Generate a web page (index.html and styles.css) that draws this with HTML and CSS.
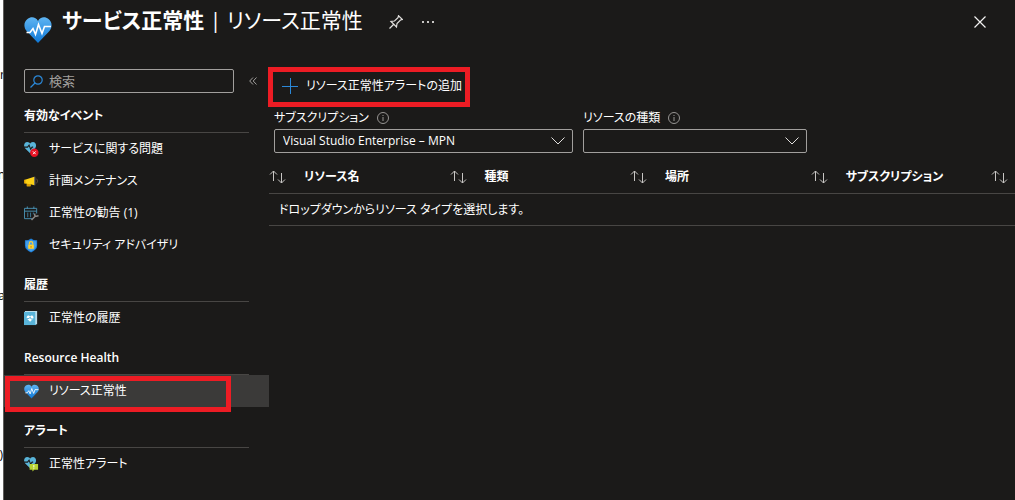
FILE: index.html
```
<!DOCTYPE html>
<html lang="ja">
<head>
    <meta charset="UTF-8">
    <title>サービス正常性 | リソース正常性</title>
    <link rel="stylesheet" href="styles.css">
</head>
<body>
    <svg class="defs" aria-hidden="true">
        <defs>
            <linearGradient id="heartFill" x1="0" y1="0" x2="0" y2="1">
                <stop offset="0" stop-color="#5eb4f2" />
                <stop offset="1" stop-color="#0f78d6" />
            </linearGradient>
            <symbol id="heart" viewBox="0 0 28 26">
                <path fill="url(#heartFill)" d="M14 26 L3 14.500 C-1 10 0 4.500 3.500 2 C7-0.800 12 0 14 4 C16 0 21-0.800 24.500 2 C28 4.500 29 10 25 14.500 Z" />
                <path fill="none" stroke="#fff" stroke-width="1.600" d="M2.500 15.500 H6 L9 11.500 L11.500 17.500 L14.500 7.500 L18 16.500 L20.500 9.500 H27" />
            </symbol>
            <symbol id="smallheart" viewBox="0 0 12 11">
                <path fill="#59b4d9" d="M6 11 L1 6 C-1 3.500 0.500 0 3.200 0 C4.600 0 5.600 0.800 6 1.800 C6.400 0.800 7.400 0 8.800 0 C11.500 0 13 3.500 11 6 Z" />
                <path fill="none" stroke="#1b1a19" d="M0 5 H3.500 L5 3 L6.500 7 L8 5 H9" />
            </symbol>
            <symbol id="sort" viewBox="0 0 17 14">
                <path fill="none" stroke="#c8c6c4" d="M4.500 11 V1 M1 4.500 L4.500 1 L8 4.500 M12.500 3 V13 M9 9.500 L12.500 13 L16 9.500" />
            </symbol>
            <symbol id="info" viewBox="0 0 12 12">
                <circle cx="6" cy="6" r="5.500" fill="none" stroke="#979593" />
                <path stroke="#979593" d="M6 5 V9 M6 3 V4" />
            </symbol>
        </defs>
    </svg>

    <div class="behind">
        <span class="peek peek1">r</span>
        <span class="peek peek2">n</span>
        <span class="peek peek3">a</span>
        <span class="peek peek4">)</span>
    </div>

    <div class="blade">
        <header class="blade-header">
            <svg class="blade-icon"><use href="#heart" /></svg>
            <h1>サービス正常性 <span>| リソース正常性</span></h1>
            <button class="icon-btn pin" aria-label="ピン留め">
                <svg width="14" height="14" viewBox="0 0 14 14" fill="none" stroke="#e1dfdd" stroke-width="1.200">
                    <path d="M0.500 13.500 L4.500 9.500 M2 6.500 L7.500 12 L8 8.500 L11.500 5 L13.500 4.500 L9.500 0.700 L9 2.700 L5.500 6 Z" />
                </svg>
            </button>
            <button class="icon-btn more" aria-label="その他">
                <svg width="12" height="2" fill="#c8c6c4"><path d="M0 0h2v2h-2z M5 0h2v2h-2z M10 0h2v2h-2z" /></svg>
            </button>
            <button class="icon-btn close" aria-label="閉じる">
                <svg width="12" height="12" stroke="#f3f2f1" stroke-width="1.200"><path d="M0.500 0.500 L11.500 11.500 M11.500 0.500 L0.500 11.500" /></svg>
            </button>
        </header>

        <div class="blade-body">
            <nav class="menu">
                <div class="menu-top">
                    <label class="search">
                        <svg width="13" height="13" viewBox="0 0 13 13" fill="none" stroke="#2b88d8" stroke-width="1.200">
                            <circle cx="8" cy="5" r="4.200" /><path d="M5 8 L0.500 12.500" />
                        </svg>
                        <input type="text" placeholder="検索" aria-label="検索">
                    </label>
                    <button class="icon-btn" aria-label="折りたたむ">
                        <svg width="8" height="8" viewBox="0 0 8 8" fill="none" stroke="#a19f9d"><path d="M4 0.500 L0.700 4 L4 7.500 M7.500 0.500 L4.200 4 L7.500 7.500" /></svg>
                    </button>
                </div>

                <section>
                    <h2>有効なイベント</h2>
                    <ul>
                        <li><a href="#">
                            <svg class="menu-icon" viewBox="0 0 16 16">
                                <use href="#smallheart" x="0" y="0" width="13" height="12" />
                                <circle cx="11" cy="11.500" r="4.500" fill="#e81123" />
                                <path stroke="#fff" d="M9.500 10 L12.500 13 M12.500 10 L9.500 13" />
                            </svg>サービスに関する問題</a></li>
                        <li><a href="#">
                            <svg class="menu-icon" viewBox="0 0 16 16">
                                <path fill="#fcd116" d="M1 6 L11 3 V12 L7 11 V13 H3 V10.500 L1 10 Z" />
                                <path fill="#dd9d00" d="M0 6h1.500v4h-1.500z M3 10.500 L7 11 V13 H3 Z" />
                                <path fill="#7a7a7a" d="M11 3h1v9h-1z" />
                                <path fill="none" stroke="#5a4a3a" d="M13.500 5 Q15.500 7.500 13.500 10" />
                            </svg>計画メンテナンス</a></li>
                        <li><a href="#">
                            <svg class="menu-icon" viewBox="0 0 16 16">
                                <path fill="none" stroke="#4a93b5" d="M9 13.500 H0.500 V2.500 H13.500 V8 M0.500 5.500 H13.500 M3.500 0.500 V3 M10.500 0.500 V3" />
                                <path stroke="#3f7d9b" d="M4 7 V12 M7 7 V12 M10 7 V9" />
                                <path fill="none" stroke="#8a8886" stroke-width="1.600" d="M8 15 L12.500 10.500 M11.500 8 Q11 11 13 11 L15.500 10.500" />
                            </svg>正常性の勧告 (1)</a></li>
                        <li><a href="#">
                            <svg class="menu-icon" viewBox="0 0 16 16">
                                <path fill="#1f7fd8" d="M7.500 0.500 Q10 2.500 14 2.500 V8 Q14 12.500 7.500 15.500 Q1 12.500 1 8 V2.500 Q5 2.500 7.500 0.500 Z" />
                                <path fill="#5db2f5" d="M7.500 2 Q10 3.500 13 3.500 V8 Q12.500 11.500 7.500 14.500 Q2.500 11.500 2 8 V3.500 Q5 3.500 7.500 2 Z" opacity="0.600" />
                                <path fill="#ffd02f" d="M4.500 7h6v4.500h-6z" />
                                <path fill="none" stroke="#ffd02f" stroke-width="1.200" d="M5.700 7 V5.500 Q5.700 3.800 7.500 3.800 Q9.300 3.800 9.300 5.500 V7" />
                                <path fill="#c77f00" d="M7 8.500h1v2h-1z" />
                            </svg>セキュリティ アドバイザリ</a></li>
                    </ul>
                </section>

                <section>
                    <h2>履歴</h2>
                    <ul>
                        <li><a href="#">
                            <svg class="menu-icon" viewBox="0 0 16 16">
                                <path fill="#59b4d9" d="M0 1h13v14h-13z" />
                                <path fill="#b9dcea" d="M1 0h13v1h-13z M12 1h2v13h-2z" />
                                <path fill="#fff" d="M6.500 11.500 L3.500 8.500 C2 6.500 3.500 4.500 5 4.700 Q6.200 5 6.500 6 Q6.800 5 8 4.700 C9.500 4.500 11 6.500 9.500 8.500 Z" />
                                <path fill="none" stroke="#59b4d9" d="M3 8 H5.500 L6.500 6.500 L7.500 8.500 H10" />
                            </svg>正常性の履歴</a></li>
                    </ul>
                </section>

                <section>
                    <h2>Resource Health</h2>
                    <ul>
                        <li class="selected"><a href="#">
                            <svg class="menu-icon"><use href="#heart" /></svg>リソース正常性</a></li>
                    </ul>
                </section>

                <section>
                    <h2>アラート</h2>
                    <ul>
                        <li><a href="#">
                            <svg class="menu-icon" viewBox="0 0 16 16">
                                <use href="#smallheart" x="0" y="0" width="13" height="12" />
                                <path fill="#b8d432" d="M6 7.500h9v6h-4l-2 2v-2h-3z" />
                                <path stroke="#fff" d="M10.500 8.500 V11 M10.500 11.500 V12.500" />
                            </svg>正常性アラート</a></li>
                    </ul>
                </section>
            </nav>

            <main>
                <div class="commands">
                    <button class="command">
                        <svg width="16" height="16" stroke="#2b88d8"><path d="M8.500 0 V16 M0 8.500 H16" /></svg>
                        リソース正常性アラートの追加
                    </button>
                </div>

                <div class="filters">
                    <div class="filter subscription">
                        <div class="filter-label"><label for="subscription">サブスクリプション</label><svg><use href="#info" /></svg></div>
                        <div class="dropdown">
                            <select id="subscription"><option>Visual Studio Enterprise – MPN</option></select>
                            <svg viewBox="0 0 14 8"><path d="M0.500 0.500 L7 7 L13.500 0.500" /></svg>
                        </div>
                    </div>
                    <div class="filter resource-type">
                        <div class="filter-label"><label for="type">リソースの種類</label><svg><use href="#info" /></svg></div>
                        <div class="dropdown">
                            <select id="type"><option></option></select>
                            <svg viewBox="0 0 14 8"><path d="M0.500 0.500 L7 7 L13.500 0.500" /></svg>
                        </div>
                    </div>
                </div>

                <table>
                    <thead>
                        <tr>
                            <th><button><svg><use href="#sort" /></svg>リソース名</button></th>
                            <th><button><svg><use href="#sort" /></svg>種類</button></th>
                            <th><button><svg><use href="#sort" /></svg>場所</button></th>
                            <th><button><svg><use href="#sort" /></svg>サブスクリプション</button></th>
                            <th class="last"><button aria-label="並べ替え"><svg><use href="#sort" /></svg></button></th>
                        </tr>
                    </thead>
                    <tbody>
                        <tr><td colspan="5">ドロップダウンからリソース タイプを選択します。</td></tr>
                    </tbody>
                </table>
            </main>
        </div>
    </div>
</body>
</html>
```
FILE: styles.css
```
*, *::before, *::after { box-sizing: border-box; }
body {
    margin: 0; display: flex; min-height: 100vh; overflow-x: hidden;
    background: #1b1a19; color: #fff;
    font: 12px/18px "Open Sans", "Noto Sans CJK JP", sans-serif;
    font-feature-settings: "palt";
}
button, input, select { font: inherit; font-feature-settings: inherit; color: inherit; }
button { background: none; border: none; padding: 0; cursor: pointer; }
svg { display: block; flex: none; }
ul { list-style: none; margin: 0; padding: 0; }
.defs { position: absolute; width: 0; height: 0; }

/* page underneath the blade */
.behind { position: relative; flex: none; width: 3px; background: #fff; color: #000; overflow: hidden; }
.peek { position: absolute; right: -2px; }
.peek1 { top: 66px; }
.peek2 { top: 166px; }
.peek3 { top: 287px; }
.peek4 { top: 446px; right: 0; }

.blade { flex: 1; min-width: 0; border-left: 1px solid #605e5c; }
.blade-header { display: flex; align-items: flex-start; height: 61px; padding: 4px 29px 0 20px; }
.blade-icon { width: 28px; height: 26px; margin: 13px 10px 0 0; }
h1 { margin: 0; font-size: 21px; line-height: 32px; font-weight: 600; white-space: nowrap; }
h1 span { font-weight: 400; }
.icon-btn { display: flex; align-items: center; justify-content: center; height: 36px; }
.pin { margin-left: 26px; }
.more { margin-left: 19px; }
.close { margin-left: auto; }

.blade-body { display: flex; }
.menu { flex: none; width: 265px; padding-top: 8px; }
.menu-top { display: flex; align-items: center; gap: 15px; height: 24px; padding-left: 20px; margin-bottom: 14px; }
.search { display: flex; align-items: center; gap: 6px; width: 210px; height: 24px; padding: 0 5px; border: 1px solid #a19f9d; border-radius: 2px; }
.search input { flex: 1; min-width: 0; height: 20px; padding: 0; border: none; outline: none; background: none; font-size: 13px; }
.search input::placeholder { color: #a19f9d; opacity: 1; }
.menu section + section { margin-top: 15px; }
h2 { margin: 0 20px; padding-bottom: 7px; border-bottom: 1px solid #484644; font-size: 12px; line-height: 18px; font-weight: 600; }
.menu a { display: flex; align-items: center; height: 32px; padding-left: 20px; color: #fff; text-decoration: none; }
.menu a:hover { background: #323130; }
.menu-icon { width: 15px; height: 15px; margin-right: 10px; }
.selected { position: relative; background: #3b3a39; }

/* red highlight frames */
.selected::after, .command::after { content: ""; position: absolute; border: 5px solid #ed1c24; pointer-events: none; }
.selected::after { left: 1px; top: 1px; width: 226px; height: 36px; }
.command::after { left: -14px; top: -3px; width: 202px; height: 40px; }

main { flex: 1; min-width: 0; }
.commands { display: flex; height: 47px; padding: 9px 0 6px 13px; }
.command { position: relative; display: flex; align-items: center; gap: 8px; height: 32px; white-space: nowrap; }

.filters { display: flex; gap: 10px; padding-left: 5px; }
.subscription { width: 299px; }
.resource-type { width: 224px; }
.filter-label { display: flex; align-items: center; gap: 8px; height: 21px; padding-bottom: 2px; }
.filter-label svg { width: 12px; height: 12px; }
.dropdown { position: relative; }
.dropdown select {
    display: block; width: 100%; height: 24px; padding: 0 28px 0 8px;
    appearance: none; background: #1b1a19; border: 1px solid #a19f9d; border-radius: 2px;
}
.dropdown svg { position: absolute; right: 8px; top: 8px; width: 14px; height: 8px; fill: none; stroke: #e1dfdd; pointer-events: none; }

table { width: 100%; margin-top: 7px; table-layout: fixed; border-collapse: separate; border-spacing: 0; }
th, td { padding: 0; border-bottom: 1px solid #484644; text-align: left; }
th { height: 34px; font-weight: 600; }
th.last { width: 24px; }
th button { display: flex; align-items: center; gap: 18px; white-space: nowrap; }
th svg { width: 17px; height: 14px; }
td { height: 32px; padding-left: 10px; }
```
